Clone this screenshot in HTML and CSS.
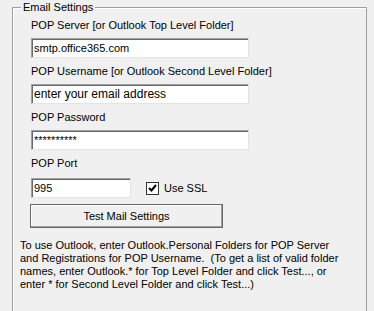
FILE: index.html
```html
<!DOCTYPE html>
<html lang="en">
<head>
    <meta charset="UTF-8">
    <title>Email Settings</title>
    <link rel="stylesheet" href="styles.css">
</head>
<body>
    <!-- Email settings group box -->
    <div class="group">
        <div class="legend">Email Settings</div>

        <div class="field">
            <div class="field-label">POP Server [or Outlook Top Level Folder]</div>
            <input class="textbox wide" type="text" value="smtp.office365.com">
        </div>

        <div class="field">
            <div class="field-label">POP Username [or Outlook Second Level Folder]</div>
            <input class="textbox wide hint" type="text" value="enter your email address">
        </div>

        <div class="field">
            <div class="field-label">POP Password</div>
            <input class="textbox wide" type="text" value="**********">
        </div>

        <div class="field">
            <div class="field-label">POP Port</div>
            <div class="port-row">
                <input class="textbox narrow" type="text" value="995">
                <label class="check">
                    <span class="check-box">
                        <svg width="9" height="9" viewBox="0 0 9 9">
                            <path d="M1 4 L3.5 6.5 L8 1" fill="none" stroke="#000" stroke-width="2"/>
                        </svg>
                    </span>
                    Use SSL
                </label>
            </div>
        </div>

        <button class="btn">Test Mail Settings</button>

        <p class="help">
            To use Outlook, enter Outlook.Personal Folders for POP Server<br>
            and Registrations for POP Username.&nbsp; (To get a list of valid folder<br>
            names, enter Outlook.* for Top Level Folder and click Test..., or<br>
            enter * for Second Level Folder and click Test...)
        </p>
    </div>
</body>
</html>
```

FILE: styles.css
```css
body {
    margin: 0;
    background: #f0f0f0;
    font-family: 'Liberation Sans', Arial, sans-serif;
    font-size: 11px;
    color: #000;
    height: 311px;
    overflow: hidden;
}

/* Group box */
.group {
    position: relative;
    margin: 7px 0 0 12px;
    width: 355px;
    height: 304px;
    border: 1px solid #a0a0a0;
    border-bottom: none;
    box-shadow: inset 1px 1px 0 #fff;
    padding: 11px 0 0 18px;
    box-sizing: border-box;
}

.legend {
    position: absolute;
    top: -7px;
    left: 8px;
    padding: 0 2px;
    background: #f0f0f0;
    line-height: 13px;
}

/* Fields */
.field-label {
    line-height: 13px;
}

.field {
    display: flex;
    flex-direction: column;
    gap: 6px;
    margin-bottom: 7px;
}

.textbox {
    display: block;
    height: 20px;
    margin: 0;
    padding: 0 0 0 2px;
    box-sizing: border-box;
    background: #fff;
    border: 1px solid;
    border-color: #a0a0a0 #e3e3e3 #e3e3e3 #a0a0a0;
    box-shadow: inset 1px 1px 0 #696969;
    font-family: 'Liberation Sans', Arial, sans-serif;
    font-size: 11px;
    color: #000;
    outline: none;
}

.textbox.wide {
    width: 218px;
}

.textbox.narrow {
    width: 100px;
}

.textbox.hint {
    font-size: 12px;
}

.port-row {
    display: flex;
    align-items: center;
    gap: 15px;
    margin-top: 2px;
    margin-bottom: -1px;
}

.check {
    display: flex;
    align-items: center;
    gap: 5px;
}

.check-box {
    width: 11px;
    height: 11px;
    background: #fff;
    border: 1px solid #333;
    display: flex;
    align-items: center;
    justify-content: center;
}

/* Button */
.btn {
    display: block;
    width: 193px;
    height: 24px;
    margin: 0 0 0 -1px;
    padding: 0;
    background: #f0f0f0;
    border: 1px solid #696969;
    box-shadow: inset -1px -1px 0 #a0a0a0, inset 1px 1px 0 #fff;
    font-family: 'Liberation Sans', Arial, sans-serif;
    font-size: 11px;
    color: #000;
}

/* Help text */
.help {
    margin: 11px 0 0 -11px;
    line-height: 13px;
    white-space: nowrap;
}
```
